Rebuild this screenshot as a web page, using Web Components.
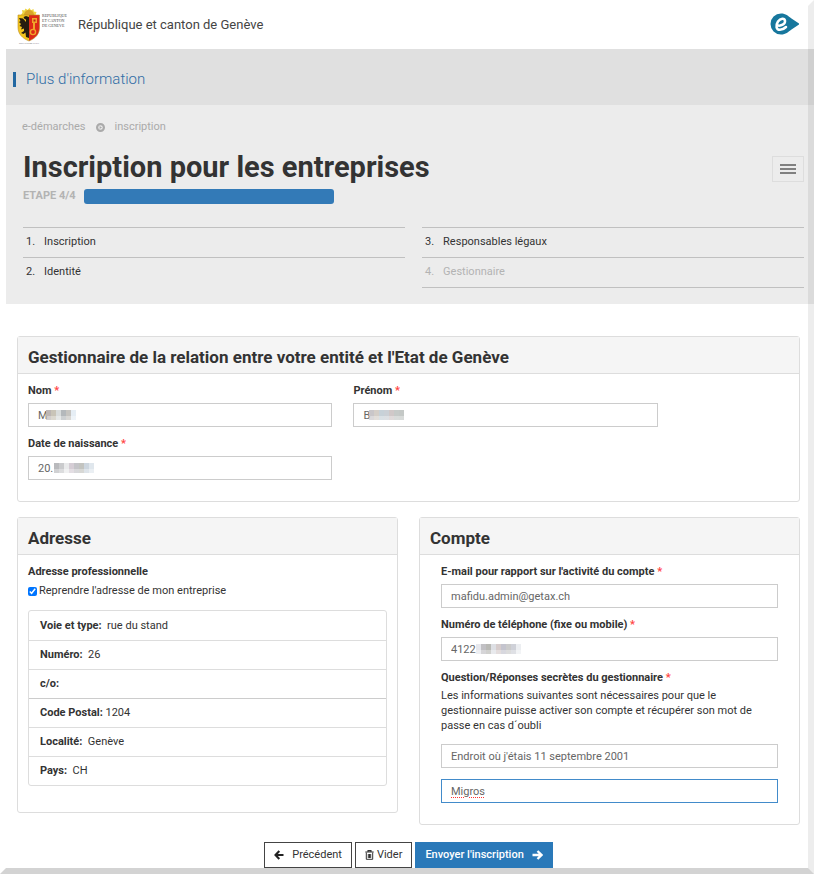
<!DOCTYPE html>
<html lang="fr">
<head>
<meta charset="utf-8">
<title>Inscription pour les entreprises</title>
<style>
body { margin: 0; background: #fff; font-family: Roboto, "Liberation Sans", sans-serif; font-size: 11px; line-height: 16px; color: #333; }
</style>
</head>
<body>
<ge-page>
  <ge-header slot="top">République et canton de Genève</ge-header>
  <ge-info-bar slot="top">Plus d'information</ge-info-bar>
  <ge-intro slot="top" heading="Inscription pour les entreprises" step="ETAPE 4/4"></ge-intro>
  <form-panel heading="Gestionnaire de la relation entre votre entité et l'Etat de Genève">
    <field-grid>
      <text-field label="Nom" value="M" redact="18" cells="bcb6b4 c9c4b8 d9dcdc b4b8bb c6c4c0 e6eef5"></text-field>
      <text-field label="Prénom" value="B" redact="16" cells="c9c6c9 d4cec8 c7d1d8 cbd0d6 d0c8c8 c6cac8 c4c8c6"></text-field>
      <text-field label="Date de naissance" value="20." redact="26" cells="b9babd cacbcd e9eaeb d5cdd5 c4c4c8 c3c4c0 cdd6df e0e7ed"></text-field>
    </field-grid>
  </form-panel>
  <panel-pair>
    <form-panel heading="Adresse" class="address">
      <address-block></address-block>
    </form-panel>
    <form-panel heading="Compte" class="account">
      <text-field label="E-mail pour rapport sur l'activité du compte" value="mafidu.admin@getax.ch"></text-field>
      <text-field label="Numéro de téléphone (fixe ou mobile)" value="4122" redact="35" cells="e6e7ec c1c0c4 b9b9b5 dddfe4 d6cccc c4c4ce cbcbcb cfd1d8 eceef1"></text-field>
      <secret-question></secret-question>
    </form-panel>
  </panel-pair>
  <action-bar></action-bar>
</ge-page>

<script>
const define = (name, html, setup) => {
  const template = document.createElement('template');
  template.innerHTML = '<style>*{box-sizing:border-box}</style>' + html;
  customElements.define(name, class extends HTMLElement {
    connectedCallback() {
      if (this.shadowRoot) return;
      const root = this.attachShadow({ mode: 'open' });
      root.append(template.content.cloneNode(true));
      if (setup) setup(this, root);
    }
  });
};

const inputStyle = `
  input.text { display:block; width:100%; height:24px; margin:0; padding:0 9px; border:1px solid #ccc; border-radius:0; background:#fff; font:inherit; color:#666; outline:none; }`;

define('ge-page', `
<style>
  :host { display:block; position:relative; box-sizing:border-box; min-height:100vh; padding:0 0 5px 6px; }
  :host::after { content:""; position:absolute; inset:0; border:6px solid transparent; border-right-color:rgba(0,0,0,.07); border-bottom-color:#d3d3d3; pointer-events:none; }
  main { display:flex; flex-direction:column; gap:15px; padding:32px 14px 0 11px; }
</style>
<slot name="top"></slot>
<main><slot></slot></main>`);

define('ge-header', `
<style>
  :host { display:flex; align-items:center; height:49px; padding:0 15px 0 11px; box-sizing:border-box; font-size:13px; color:#444; }
  .crest { display:block; flex:none; width:50px; height:38px; margin:4px 11px 0 0; }
  .brand { display:block; margin:0 0 2px auto; width:29px; height:22px; }
  text { font-family:"Liberation Serif", serif; fill:#444; }
</style>
<svg class="crest" viewBox="0 0 50 38" aria-hidden="true">
  <path d="M4 7 5.500 4.500 5 2 7.500 2.500 8.500.500 10.500 2 12.500 0 14 2.200 16.500 1 16.800 3.500 19.500 4 18.500 7Z" fill="#efd43f"/>
  <path d="M7 7a5 5 0 0 1 10 0Z" fill="#d9a428"/>
  <path d="M1 7H12V33C5 30 1 26 1 19Z" fill="#f3c51d"/>
  <path d="M12 7H22.500V19C22.500 26 19 30 12 33Z" fill="#dd2a18"/>
  <path d="M12 9 9 8 6.500 9 7.500 11 9 11.500 9 14 6 10.500 2 10 3.500 13 2 14 4 16 2.500 18 5 19 4 21.500 7 20.500 7 23 4 25 6.500 26 8.500 24.500 9 29 12 30Z" fill="#251c10"/>
  <path d="M15 10h5v5h-2v7h-2v-7h-1Z" fill="#f0a52a"/>
  <path d="M16.500 11.500h2v2h-2Z" fill="#bd2117"/>
  <circle cx="16" cy="24" r="2.600" fill="none" stroke="#f0a52a" stroke-width="1.400"/>
  <path d="M1 7H22.500V19C22.500 26 19 30 12 33C5 30 1 26 1 19Z" fill="none" stroke="#b98a20" stroke-width=".600"/>
  <text x="25" y="9" font-size="4">REPUBLIQUE</text>
  <text x="25" y="14" font-size="4">ET CANTON</text>
  <text x="25" y="19" font-size="4">DE GENEVE</text>
  <text x="2" y="36" font-size="2">POST TENEBRAS LUX</text>
</svg>
<slot></slot>
<svg class="brand" viewBox="0 0 29 22" aria-hidden="true">
  <path d="M11 .500C16 .500 18 3 21.500 5.500L29 10.500Q29.500 11 29 11.500L21.500 16.500C18 19 16 21.500 11 21.500A10.500 10.500 0 0 1 11 .500Z" fill="#17779d"/>
  <path d="M7 12.300C11 13.500 15.500 11 15 7.800C14.500 4.800 10.500 5 8 8.500C5.500 12.500 6 16.800 10 16.800C12.500 16.800 14.500 15.500 16 14" fill="none" stroke="#fff" stroke-width="2.500" stroke-linecap="round"/>
</svg>`);

define('ge-info-bar', `
<style>
  :host { display:flex; align-items:center; height:56px; padding:4px 7px 0; box-sizing:border-box; background:#e0e0e0; }
  a { padding-left:10px; border-left:3px solid #2368a2; font-size:15px; line-height:15px; font-weight:300; color:#2f6ca5; text-decoration:none; }
</style>
<a href="#"><slot></slot></a>`);

define('ge-intro', `
<style>
  :host { display:block; padding:14px 10px 16px 16px; background:#ececec; }
  nav { display:flex; align-items:center; gap:10px; color:#aaa; }
  nav a { color:inherit; text-decoration:none; }
  nav svg { width:9px; height:9px; }
  .title { display:flex; align-items:center; justify-content:space-between; margin:14px 0 0 1px; }
  h1 { margin:0; font-size:29px; line-height:36px; font-weight:700; color:#333; }
  button { display:flex; align-items:center; justify-content:center; width:32px; height:26px; margin-top:4px; padding:0; border:1px solid #ddd; background:transparent; }
  .progress { display:flex; align-items:center; gap:8px; margin:3px 0 0 1px; color:#b3b3b3; font-weight:700; }
  .bar { width:32%; height:15px; border-radius:3px; background:#337ab7; }
  ol { display:grid; grid-template-columns:1fr 1fr; grid-template-rows:auto auto; grid-auto-flow:column; column-gap:17px; list-style:none; margin:23px 0 0 1px; padding:0; }
  li { display:flex; gap:9px; height:30px; padding:6px 3px 0; border-top:1px solid #c0c0c0; }
  li:last-child { height:31px; border-bottom:1px solid #c0c0c0; color:#b3b3b3; }
</style>
<nav aria-label="Fil d'Ariane"><a href="#">e-démarches</a><svg viewBox="0 0 9 9" aria-hidden="true"><circle cx="4.500" cy="4.500" r="3.400" fill="none" stroke="#aaa" stroke-width="2.200"/><path d="M3.600 3 6 4.500 3.600 6Z" fill="#aaa"/></svg><a href="#">inscription</a></nav>
<div class="title"><h1></h1><button type="button" aria-label="Menu"><svg width="16" height="12" viewBox="0 0 16 12"><path d="M0 2H16M0 6H16M0 10H16" stroke="#808080" stroke-width="2"/></svg></button></div>
<div class="progress"><span class="step"></span><div class="bar"></div></div>
<ol><li><span>1.</span><span>Inscription</span></li><li><span>2.</span><span>Identité</span></li><li><span>3.</span><span>Responsables légaux</span></li><li><span>4.</span><span>Gestionnaire</span></li></ol>`,
(host, root) => {
  root.querySelector('h1').textContent = host.getAttribute('heading');
  root.querySelector('.step').textContent = host.getAttribute('step');
});

define('form-panel', `
<style>
  :host { display:block; box-sizing:border-box; border:1px solid #ddd; border-radius:3px; background:#fff; }
  h2 { margin:0; padding:10px 10px 6px; border-bottom:1px solid #ddd; background:#f5f5f5; font-size:17px; line-height:20px; font-weight:700; color:#333; }
  div { padding:9px 10px 12px; }
  :host(.address) div { padding-bottom:26px; }
  :host(.account) div { padding:9px 21px 21px; }
</style>
<h2></h2><div><slot></slot></div>`,
(host, root) => { root.querySelector('h2').textContent = host.getAttribute('heading'); });

define('field-grid', `
<style>:host { display:grid; grid-template-columns:40% 40%; column-gap:21px; }</style><slot></slot>`);

define('panel-pair', `
<style>:host { display:grid; grid-template-columns:1fr 1fr; column-gap:21px; align-items:start; }</style><slot></slot>`);

define('text-field', `
<style>
  :host { display:block; padding-bottom:9px; }
  label { display:block; margin-bottom:4px; font-weight:700; }
  i { font-style:normal; color:#f44; }
  .box { position:relative; }
  .mosaic { position:absolute; top:7px; height:10px; display:flex; pointer-events:none; }
  .mosaic b { width:5px; }
  ${inputStyle}
</style>
<label for="f"><span></span> <i>*</i></label>
<div class="box"><input class="text" id="f" type="text"></div>`,
(host, root) => {
  root.querySelector('span').textContent = host.getAttribute('label');
  root.querySelector('input').value = host.getAttribute('value');
  if (!host.hasAttribute('cells')) return;
  const mosaic = document.createElement('div');
  mosaic.className = 'mosaic';
  mosaic.style.left = host.getAttribute('redact') + 'px';
  for (const c of host.getAttribute('cells').split(' ')) {
    const cell = document.createElement('b');
    cell.style.background = `linear-gradient(#${c} 60%, #${c}aa 60%)`;
    mosaic.append(cell);
  }
  root.querySelector('.box').append(mosaic);
});

define('address-block', `
<style>
  :host { display:block; }
  h3 { margin:0; font-size:inherit; font-weight:700; }
  label { display:flex; align-items:center; gap:2px; margin-top:3px; }
  input { width:9px; height:9px; margin:0; accent-color:#0075ff; }
  ul { list-style:none; margin:11px 0 0; padding:0; border:1px solid #ddd; border-radius:3px; }
  li { height:29px; padding:6px 11px; border-top:1px solid #ddd; }
  li:first-child { border-top-color:transparent; }
  li:nth-child(4) { border-top-color:#ccc; }
</style>
<h3>Adresse professionnelle</h3>
<label><input type="checkbox" checked><span>Reprendre l'adresse de mon entreprise</span></label>
<ul>
  <li><b>Voie et type:</b>&nbsp; rue du stand</li>
  <li><b>Numéro:</b>&nbsp; 26</li>
  <li><b>c/o:</b></li>
  <li><b>Code Postal:</b> 1204</li>
  <li><b>Localité:</b>&nbsp; Genève</li>
  <li><b>Pays:</b>&nbsp; CH</li>
</ul>`);

define('secret-question', `
<style>
  :host { display:block; }
  label { display:block; font-weight:700; }
  i { font-style:normal; color:#f44; }
  p { margin:2px 0 11px; line-height:15px; }
  ${inputStyle}
  input.answer { margin-top:11px; border-color:#428bca; text-decoration:underline dotted #f33 1px; text-underline-offset:2px; }
</style>
<label for="q">Question/Réponses secrètes du gestionnaire <i>*</i></label>
<p>Les informations suivantes sont nécessaires pour que le gestionnaire puisse activer son compte et récupérer son mot de passe en cas d´oubli</p>
<input class="text" id="q" type="text" value="Endroit où j'étais 11 septembre 2001">
<input class="text answer" type="text" value="Migros" aria-label="Réponse secrète">`);

define('action-bar', `
<style>
  :host { display:flex; justify-content:center; gap:3px; margin-top:2px; }
  button { display:flex; align-items:center; height:26px; padding:0 9px; border:1px solid #444; border-radius:0; background:#fff; font:inherit; color:#333; }
  .prev { gap:8px; }
  .clear { gap:3px; }
  .send { gap:8px; border-color:#2a79b9; background:#2a79b9; color:#fff; font-weight:500; }
</style>
<button type="button" class="prev"><svg width="10" height="10" viewBox="0 0 10 10"><path d="M9.500 5H2M5.300 1 1.500 5l3.800 4" fill="none" stroke="#222" stroke-width="2.100"/></svg>Précédent</button>
<button type="button" class="clear"><svg width="9" height="10" viewBox="0 0 9 10"><path d="M.300 2H8.700M3 1.700V.600H6V1.700" fill="none" stroke="#333" stroke-width="1.100"/><path d="M1.300 2.500V9.300H7.700V2.500M3.300 4V8M4.500 4V8M5.700 4V8" fill="none" stroke="#333" stroke-width="1"/></svg>Vider</button>
<button type="submit" class="send">Envoyer l'inscription<svg width="11" height="10" viewBox="0 0 11 10"><path d="M.500 5H9M5.500 1 9.500 5l-4 4" fill="none" stroke="#fff" stroke-width="2.300"/></svg></button>`);
</script>
</body>
</html>
